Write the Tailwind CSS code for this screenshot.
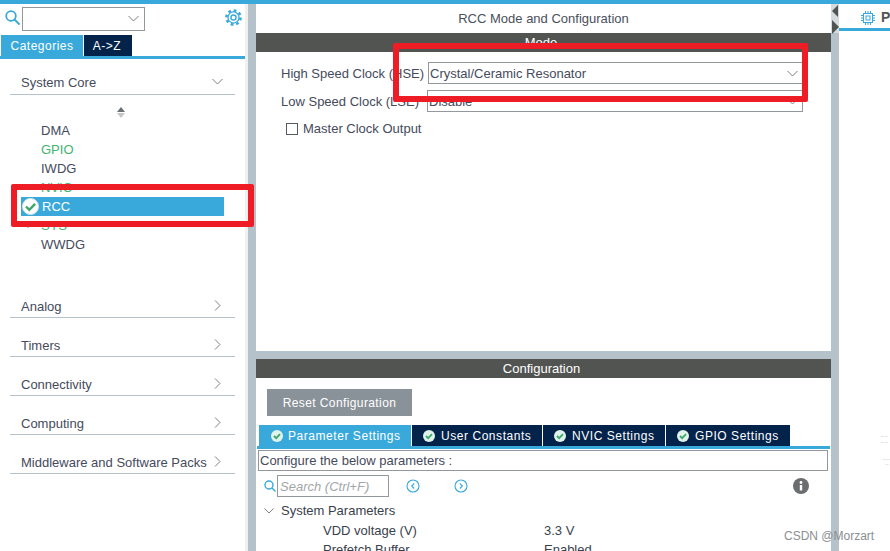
<!DOCTYPE html>
<html lang="en">
<head>
  <meta charset="UTF-8">
  <title>RCC Mode and Configuration</title>
  <script src="https://cdn.jsdelivr.net/npm/@tailwindcss/browser@4"></script>
</head>
<body class="relative w-[890px] h-[551px] overflow-hidden bg-white font-['Liberation_Sans',sans-serif] text-[13px] text-[#454a5c] flex flex-col">
  <div class="h-[4px] shrink-0 bg-[#39a9dc]"></div>
  <div class="flex flex-1 min-h-0">
    <!-- Left panel -->
    <aside class="w-[245px] shrink-0 flex flex-col">
      <div class="h-[31px] flex items-center">
        <svg class="w-[15px] h-[15px] ml-[5px] mt-[-4px]" viewBox="0 0 15 15" fill="none" stroke="#39a9dc" stroke-width="1.800"><circle cx="6" cy="6" r="4.800"/><path d="M9.500 9.500l4.500 4.500" stroke-linecap="round"/></svg>
        <div class="ml-[2px] mt-[-2px] w-[123px] h-[24px] border border-[#93989c] flex items-center justify-end pr-[5px]">
          <svg class="w-[11px] h-[7px]" viewBox="0 0 11 7" fill="none" stroke="#7a7f84" stroke-width="1"><path d="M.5 1l5 5 5-5"/></svg>
        </div>
        <svg class="w-[17px] h-[17px] ml-[80px] mt-[-4px]" viewBox="0 0 24 24" fill="none" stroke="#39a9dc"><circle cx="12" cy="12" r="10" stroke-width="3.600" stroke-dasharray="3.900 3.950"/><circle cx="12" cy="12" r="7.800" stroke-width="1.800"/><circle cx="12" cy="12" r="3.600" stroke-width="2"/></svg>
      </div>
      <div class="h-[21px] flex pl-[1px] gap-[1px] text-[12px] text-white tracking-[.5px]">
        <div class="w-[82px] bg-[#39a9dc] flex items-center justify-center">Categories</div>
        <div class="w-[48px] bg-[#03234b] flex items-center justify-center pr-[2px]">A-&gt;Z</div>
      </div>
      <div class="h-[3px] bg-[#39a9dc]"></div>

      <div class="px-[10px]">
        <div class="h-[36px] border-b border-[#b6c2c9] flex items-end justify-between pl-[11px] pr-[12px] pb-[2px]">
          <span>System Core</span>
          <svg class="w-[11px] h-[7px] mb-[7px]" viewBox="0 0 11 7" fill="none" stroke="#7a7f84" stroke-width="1"><path d="M.5 1l5 5 5-5"/></svg>
        </div>
        <div class="h-[184px] flex flex-col">
          <div class="h-[26px] pt-[8px] flex flex-col items-center justify-center gap-[1px] pr-[3px]">
            <span class="w-0 h-0 border-x-[4px] border-x-transparent border-b-[5px] border-b-[#6b7075]"></span>
            <span class="w-0 h-0 border-x-[4px] border-x-transparent border-t-[5px] border-t-[#c4c7ca]"></span>
          </div>
          <ul class="leading-[19px]">
            <li class="h-[19px] pl-[31px]">DMA</li>
            <li class="h-[19px] pl-[31px] text-[#3fb56f]">GPIO</li>
            <li class="h-[19px] pl-[31px]">IWDG</li>
            <li class="h-[19px] pl-[31px] text-[#3fb56f]">NVIC</li>
            <li class="h-[19px] ml-[11px] w-[203px] bg-[#39a9dc] text-white flex items-center">
              <svg class="w-[17px] h-[17px] ml-[1px] mr-[3px] shrink-0" viewBox="0 0 17 17"><circle cx="8.500" cy="8.500" r="8" fill="#fff" stroke="#dfe5e4"/><path d="M4 8.500l3.300 3.300 5.800-6" fill="none" stroke="#3fa66c" stroke-width="2.400"/></svg>
              RCC
            </li>
            <li class="h-[19px] pl-[31px] text-[#3fb56f] relative">
              <svg class="absolute left-[13px] top-[7px] w-[10px] h-[6px]" viewBox="0 0 10 6"><path d="M1 0l4 5 4-5z" fill="#3fa66c"/></svg>
              SYS
            </li>
            <li class="h-[19px] pl-[31px]">WWDG</li>
          </ul>
        </div>
        <div class="h-[39px] border-b border-[#b6c2c9] flex items-end justify-between pl-[11px] pr-[14px] pb-[1px]">
          <span>Analog</span>
          <svg class="w-[7px] h-[11px] mb-[5px]" viewBox="0 0 7 11" fill="none" stroke="#7a7f84" stroke-width="1"><path d="M1 .5l5 5-5 5"/></svg>
        </div>
        <div class="h-[39px] border-b border-[#b6c2c9] flex items-end justify-between pl-[11px] pr-[14px] pb-[1px]">
          <span>Timers</span>
          <svg class="w-[7px] h-[11px] mb-[5px]" viewBox="0 0 7 11" fill="none" stroke="#7a7f84" stroke-width="1"><path d="M1 .5l5 5-5 5"/></svg>
        </div>
        <div class="h-[39px] border-b border-[#b6c2c9] flex items-end justify-between pl-[11px] pr-[14px] pb-[1px]">
          <span>Connectivity</span>
          <svg class="w-[7px] h-[11px] mb-[5px]" viewBox="0 0 7 11" fill="none" stroke="#7a7f84" stroke-width="1"><path d="M1 .5l5 5-5 5"/></svg>
        </div>
        <div class="h-[39px] border-b border-[#b6c2c9] flex items-end justify-between pl-[11px] pr-[14px] pb-[1px]">
          <span>Computing</span>
          <svg class="w-[7px] h-[11px] mb-[5px]" viewBox="0 0 7 11" fill="none" stroke="#7a7f84" stroke-width="1"><path d="M1 .5l5 5-5 5"/></svg>
        </div>
        <div class="h-[39px] border-b border-[#b6c2c9] flex items-end justify-between pl-[11px] pr-[14px] pb-[1px]">
          <span class="whitespace-nowrap">Middleware and Software Packs</span>
          <svg class="w-[7px] h-[11px] mb-[5px]" viewBox="0 0 7 11" fill="none" stroke="#7a7f84" stroke-width="1"><path d="M1 .5l5 5-5 5"/></svg>
        </div>
      </div>
    </aside>
    <div class="w-[3px] shrink-0 bg-[#f0f0f0]"></div>
    <div class="w-[8px] shrink-0 bg-[#b6c2c9]"></div>

    <!-- Middle panel -->
    <main class="w-[575px] shrink-0 flex flex-col">
      <section class="h-[347px] flex flex-col">
        <div class="h-[29px] flex items-center justify-center text-[#4a4f5c]">RCC Mode and Configuration</div>
        <div class="h-[19px] bg-[#525452] text-white flex items-center justify-center pr-[5px]">Mode</div>
        <div class="h-[10px]"></div>
        <div class="h-[22px] flex items-center pl-[25px]">
          <label class="w-[147px] pt-[1px] whitespace-nowrap">High Speed Clock (HSE)</label>
          <div class="w-[375px] h-[22px] pt-[1px] border border-[#93989c] flex items-center justify-between pl-[1px] pr-[4px]">
            <span>Crystal/Ceramic Resonator</span>
            <svg class="w-[11px] h-[7px]" viewBox="0 0 11 7" fill="none" stroke="#7a7f84" stroke-width="1"><path d="M.5 1l5 5 5-5"/></svg>
          </div>
        </div>
        <div class="h-[22px] mt-[6px] flex items-center pl-[25px]">
          <label class="w-[146px] pt-[1px] whitespace-nowrap">Low Speed Clock (LSE)</label>
          <div class="w-[376px] h-[22px] pt-[1px] border border-[#93989c] flex items-center justify-between pl-[1px] pr-[4px]">
            <span>Disable</span>
            <svg class="w-[11px] h-[7px]" viewBox="0 0 11 7" fill="none" stroke="#7a7f84" stroke-width="1"><path d="M.5 1l5 5 5-5"/></svg>
          </div>
        </div>
        <div class="mt-[6px] h-[22px] flex items-center pl-[30px] gap-[5px]">
          <span class="w-[12px] h-[12px] border border-[#555a60]"></span>
          <span>Master Clock Output</span>
        </div>
      </section>
      <div class="h-[8px] shrink-0 bg-[#b6c2c9]"></div>
      <section class="flex-1 min-h-0 overflow-hidden">
        <div class="h-[19px] bg-[#525452] text-white flex items-center justify-center pr-[4px]">Configuration</div>
        <div class="pl-[11px] pt-[11px]">
          <button class="block w-[145px] h-[27px] bg-[#8a9299] text-[12px] text-white tracking-[.4px]">Reset Configuration</button>
        </div>
        <div class="h-[21px] mt-[9px] ml-[3px] flex gap-[1px] text-[12px] text-white tracking-[.55px] whitespace-nowrap">
          <div class="w-[152px] bg-[#39a9dc] flex items-center pl-[12px] gap-[5px]">
            <svg class="w-[12px] h-[12px]" viewBox="0 0 12 12"><circle cx="6" cy="6" r="6" fill="#dff3ea"/><path d="M3 6l2.200 2.200L9 4.200" fill="none" stroke="#3fa66c" stroke-width="1.800"/></svg>
            Parameter Settings
          </div>
          <div class="w-[130px] bg-[#03234b] flex items-center pl-[11px] gap-[6px]">
            <svg class="w-[12px] h-[12px]" viewBox="0 0 12 12"><circle cx="6" cy="6" r="6" fill="#dff3ea"/><path d="M3 6l2.200 2.200L9 4.200" fill="none" stroke="#3fa66c" stroke-width="1.800"/></svg>
            User Constants
          </div>
          <div class="w-[122px] bg-[#03234b] flex items-center pl-[11px] gap-[6px]">
            <svg class="w-[12px] h-[12px]" viewBox="0 0 12 12"><circle cx="6" cy="6" r="6" fill="#dff3ea"/><path d="M3 6l2.200 2.200L9 4.200" fill="none" stroke="#3fa66c" stroke-width="1.800"/></svg>
            NVIC Settings
          </div>
          <div class="w-[124px] bg-[#03234b] flex items-center pl-[11px] gap-[6px]">
            <svg class="w-[12px] h-[12px]" viewBox="0 0 12 12"><circle cx="6" cy="6" r="6" fill="#dff3ea"/><path d="M3 6l2.200 2.200L9 4.200" fill="none" stroke="#3fa66c" stroke-width="1.800"/></svg>
            GPIO Settings
          </div>
        </div>
        <div class="h-[3px] ml-[1px] mr-[1px] bg-[#39a9dc]"></div>
        <div class="h-[21px] mt-[1px] ml-[2px] mr-[3px] border border-[#93989c] flex items-center pl-[1px]">Configure the below parameters :</div>
        <div class="h-[22px] mt-[4px] flex items-center pl-[8px] pr-[22px]">
          <svg class="w-[12px] h-[12px]" viewBox="0 0 12 12" fill="none" stroke="#39a9dc" stroke-width="1.400"><circle cx="5" cy="5" r="4"/><path d="M8 8l3.500 3.500"/></svg>
          <div class="ml-[1px] w-[112px] h-[22px] pt-[1px] border border-[#93989c] flex items-center pl-[2px] italic text-[#a3a6a9]">Search (Ctrl+F)</div>
          <svg class="w-[14px] h-[14px] ml-[17px]" viewBox="0 0 14 14" fill="none" stroke="#39a9dc" stroke-width="1.100"><circle cx="7" cy="7" r="6"/><path d="M8.200 4.500L5.700 7l2.500 2.500"/></svg>
          <svg class="w-[14px] h-[14px] ml-[34px]" viewBox="0 0 14 14" fill="none" stroke="#39a9dc" stroke-width="1.100"><circle cx="7" cy="7" r="6"/><path d="M5.800 4.500L8.300 7l-2.500 2.500"/></svg>
          <svg class="w-[16px] h-[16px] ml-auto" viewBox="0 0 16 16"><circle cx="8" cy="8" r="8" fill="#6b6e70"/><rect x="6.800" y="7" width="2.400" height="5.500" fill="#fff"/><circle cx="8" cy="4.500" r="1.400" fill="#fff"/></svg>
        </div>
        <div class="mt-[4px] h-[20px] flex items-center pl-[8px] gap-[7px] text-[#3a3f4c]">
          <svg class="w-[10px] h-[6px]" viewBox="0 0 10 6" fill="none" stroke="#7a7f84" stroke-width="1"><path d="M.5 .5L5 5l4.500-4.500"/></svg>
          System Parameters
        </div>
        <div class="h-[19px] flex items-center pl-[67px] text-[#3a3f4c]"><span class="w-[221px]">VDD voltage (V)</span><span>3.3 V</span></div>
        <div class="h-[19px] flex items-center pl-[67px] text-[#3a3f4c]"><span class="w-[221px]">Prefetch Buffer</span><span>Enabled</span></div>
      </section>
    </main>
    <div class="w-[8px] shrink-0 flex flex-col bg-[#b6c2c9]">
      <div class="h-[29px] relative bg-[#d4dbdf]">
        <span class="absolute left-[1px] top-[1px] w-0 h-0 border-y-[6px] border-y-transparent border-r-[6px] border-r-[#525452]"></span>
        <span class="absolute left-[1px] top-[16px] w-0 h-0 border-y-[7px] border-y-transparent border-l-[7px] border-l-[#525452]"></span>
      </div>
    </div>

    <!-- Right panel -->
    <aside class="flex-1 min-w-0 relative overflow-hidden">
      <div class="h-[24px] pt-[3px] flex items-center pl-[22px] gap-[6px] text-[14px] font-bold text-[#525452] whitespace-nowrap">
        <svg class="w-[14px] h-[14px] shrink-0" viewBox="0 0 14 14" fill="none" stroke="#39a9dc" stroke-width="1"><rect x="2.500" y="2.500" width="9" height="9"/><rect x="5" y="5" width="4" height="4"/><path d="M4.500 0v2.500M7 0v2.500M9.500 0v2.500M4.500 11.500V14M7 11.500V14M9.500 11.500V14M0 4.500h2.500M0 7h2.500M0 9.500h2.500M11.500 4.500H14M11.500 7H14M11.500 9.500H14"/></svg>
        P
      </div>
      <div class="h-[3px] bg-[#39a9dc]"></div>
      <div class="absolute left-[42px] top-[429px] text-[3px] leading-[6px] text-[#999] whitespace-nowrap">— —<br>— —</div>
      <div class="absolute left-[44px] top-[453px] text-[3px] leading-[5px] text-[#999] whitespace-nowrap">— —<br>&nbsp;&nbsp;&nbsp;—</div>
    </aside>
  </div>

  <!-- Red annotation boxes and watermark drawn on top of the screenshot -->
  <div class="absolute left-[393px] top-[43px] w-[415px] h-[59px] border-[6px] border-[#ee1c25] rounded-[2px]"></div>
  <div class="absolute left-[11px] top-[184px] w-[243px] h-[43px] border-[6px] border-[#ee1c25] rounded-[2px]"></div>
  <div class="absolute left-[784px] top-[527px] text-[12px] text-[#8b8f92]">CSDN @Morzart</div>
</body>
</html>
